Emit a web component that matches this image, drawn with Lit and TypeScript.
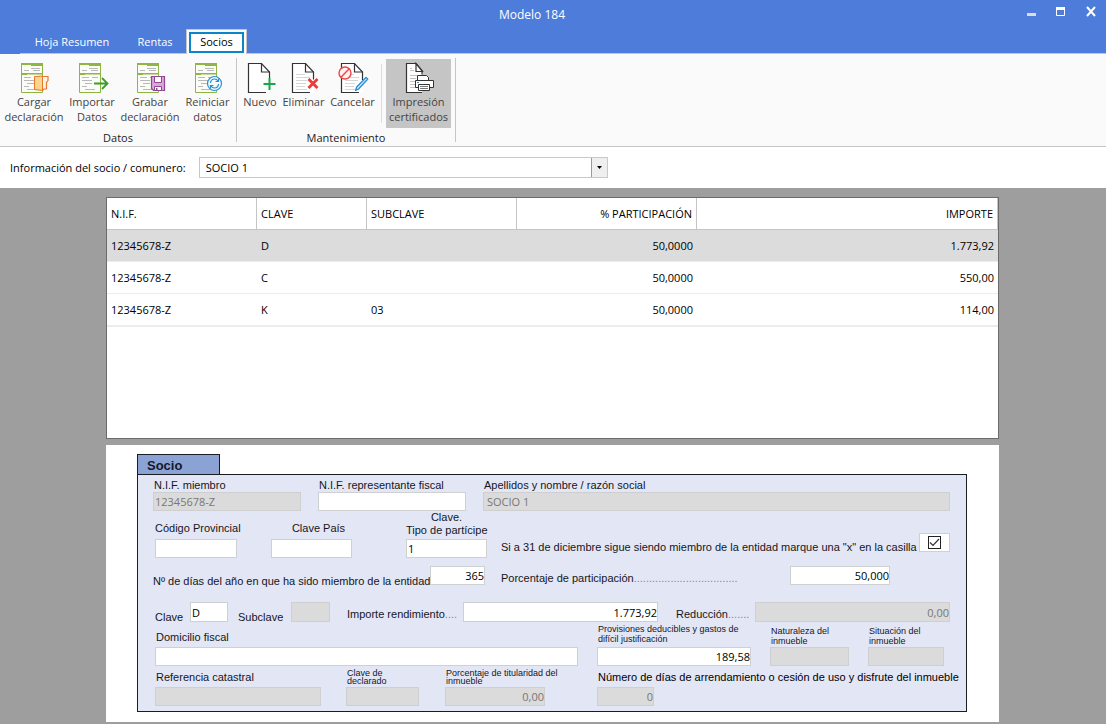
import { LitElement, html, svg, css, nothing } from "lit";
import { customElement, property } from "lit/decorators.js";
import { classMap } from "lit/directives/class-map.js";

/* Green form sheet shared by the "Datos" icons. */
const sheet = svg`
  <path d="M3.5 1.5h21v29h-21z" fill="#fbfcf8" stroke="#8fb542"/>
  <path d="M3 1h22v2H3zM13 1h12v3H13zM3 11h22v1.5H3zM3 12h6v1H3z" fill="#8fb542"/>
  <path d="M13 6.500h9M6 8.500h5M15 8.500h7M6 15.500h7M16 15.500h6M6 18.500h10M9 21.500h7M6 24.500h5M9 27.500h10" stroke="#b9b9b9"/>`;

/* White page with a folded corner used by the "Mantenimiento" icons. */
const page = svg`
  <path d="M17.5 1.5h-13v29h21v-20l-8-9z" fill="#fff"/>
  <path d="M22 30.500H4.500v-29h13l8 8.500v8" fill="none" stroke="#333" stroke-width="1.200"/>
  <path d="M17.500 1.500v8.500h8" fill="none" stroke="#333" stroke-width="1.200"/>`;

const pageLines = svg`<path d="M8 12.500h9M8 15.500h14M8 18.500h13M8 21.500h10M8 24.500h9M8 27.500h11" stroke="#d6d6d6"/>`;

const icons: Record<string, unknown> = {
  load: svg`${sheet}
    <path d="M24.500 14.500h5.500v4l-1.500 2v6.500h-2.500l-1.500 1.500" fill="#fff4e6" stroke="#e8762c" stroke-width="1.200"/>
    <path d="M16.500 14.500l8-.5v14.500l-8-1z" fill="#f8d68c" stroke="#e8762c"/>`,
  import: svg`${sheet}
    <path d="M18 21.500h13M26 16l5.500 5.500L26 27" fill="none" stroke="#3a9f2a" stroke-width="1.800"/>`,
  save: svg`${sheet}
    <path d="M17.500 14.500h13v14h-11l-2-2z" fill="#d9a9d6" stroke="#93439a" stroke-width="1.200"/>
    <path d="M20.500 14.500h7v6h-7z" fill="#fff" stroke="#93439a"/>
    <path d="M20.500 24.500h7v4h-7z" fill="#fff" stroke="#93439a"/>
    <path d="M22 26h1.500v2H22z" fill="#93439a"/>`,
  reset: svg`${sheet}
    <circle cx="22.500" cy="21.500" r="7" fill="#f4fafe" stroke="#2b8fd0" stroke-width="1.200"/>
    <path d="M18.500 21c.2-2.500 2-4 4-4 1.500 0 2.800.8 3.500 2M26.500 16.500v3h-3M26.500 22c-.2 2.500-2 4-4 4-1.500 0-2.800-.8-3.500-2M18.500 26.500v-3h3" fill="none" stroke="#2b8fd0" stroke-width="1.200"/>`,
  add: svg`${page}
    <path d="M25.500 16v12M19.500 22h12" stroke="#fafafa" stroke-width="4"/>
    <path d="M25.500 16v12M19.500 22h12" stroke="#14a84c" stroke-width="2"/>`,
  remove: svg`${page}${pageLines}
    <path d="M20.500 17l9 9M29.500 17l-9 9" stroke="#fafafa" stroke-width="5"/>
    <path d="M20.500 17l9 9M29.500 17l-9 9" stroke="#ea3a3a" stroke-width="2.800"/>`,
  cancel: svg`${page}${pageLines}
    <circle cx="8" cy="11" r="6" fill="#fdf3f3" stroke="#ee4444" stroke-width="1.400"/>
    <path d="M4 15.200l8.200-8.400" stroke="#ee4444" stroke-width="1.400"/>
    <path d="M29 15.500l1.800 1.500-9 9.800-3.300 1.700 1.200-3.500z" fill="#cfe8f8" stroke="#2b8fd0" stroke-width="1.300" stroke-linejoin="round"/>`,
  print: svg`
    <path d="M13 1.500H3.500v29H19V10z" fill="#fff"/>
    <path d="M19 30.500H3.500v-29H13l6 7v4" fill="none" stroke="#333" stroke-width="1.200"/>
    <path d="M13 1.500v8h6.500z" fill="#fff" stroke="#333" stroke-width="1.200"/>
    <path d="M7 6.500h2M7 8.500h4M7 13.500h7M7 16.500h6M7 19.500h5M7 22.500h5M7 25.500h6" stroke="#c2c2c2"/>
    <path d="M14.500 13.500h9l2 2v3h-11zM12.500 18.500h18v7h-18z" fill="#fff" stroke="#333"/>
    <path d="M15.500 22.500h11v6h-11z" fill="#fff" stroke="#333"/>
    <path d="M17 24.500h8M17 26.500h8" stroke="#777"/>
    <path d="M14 20h2v1h-2z" fill="#2b8fd0"/>`,
};

@customElement("ribbon-button")
class RibbonButton extends LitElement {
  @property() icon = "";
  @property() label = "";
  @property({ type: Boolean }) active = false;

  static styles = css`
    :host { display: block; }
    .btn {
      display: flex; flex-direction: column; align-items: center;
      width: 100%; height: 69px; margin: 0; padding: 3px 0 0;
      border: 0; background: none; color: #444;
      font: 11px/15px "Open Sans", "Noto Sans", sans-serif;
      white-space: pre;
    }
    .btn.active { background: #c5c5c5; }
    .icon { width: 32px; height: 32px; flex: none; overflow: visible; }
    .text { text-align: center; }
  `;

  render() {
    return html`<button type="button" class=${classMap({ btn: true, active: this.active })}>
      <svg class="icon" viewBox="0 0 32 32" aria-hidden="true">${icons[this.icon]}</svg>
      <span class="text">${this.label}</span>
    </button>`;
  }
}

@customElement("app-root")
class AppRoot extends LitElement {
  static styles = css`
    :host {
      display: flex; flex-direction: column; min-height: 100vh;
      background: #9e9e9e; color: #000;
      font: 11px/16px "Open Sans", "Noto Sans", sans-serif;
    }
    * { box-sizing: border-box; }
    .top { background: #4d7cdb; color: #fff; }
    .title-bar { display: grid; grid-template-columns: 42px 1fr 84px; height: 29px; align-items: center; }
    .title { grid-column: 2; margin: 0; text-align: center; font-size: 12px; font-weight: 400; line-height: 29px; }
    .controls { display: flex; gap: 20px; align-self: start; padding: 6px 0 0 4px; }
    .control { width: 10px; height: 11px; padding: 0; border: 0; background: none; color: #fff; }
    .control svg { display: block; }
    .tabs { display: flex; align-items: flex-end; height: 25px; margin-left: 20px; border-bottom: 1px solid #c5c5c5; }
    .tab { height: 24px; padding: 2px 0 0; border: 0; background: none; color: #fff; font: inherit; }
    .tab.resumen { width: 104px; }
    .tab.rentas { width: 62px; }
    .tab.selected {
      width: 61px; height: 25px; margin-bottom: -1px; padding: 2px;
      border: 1px solid #c5c5c5; border-bottom: 0; background: #fafafa; color: #000;
    }
    .focus { display: block; border: 2px solid #0b84c8; background: #fff; line-height: 16px; height: 21px; }

    .ribbon { display: flex; height: 93px; padding-top: 4px; background: #fafafa; border-bottom: 1px solid #c5c5c5; }
    .group { display: flex; flex-direction: column; height: 84px; border-right: 1px solid #c5c5c5; }
    .group-title { text-align: center; line-height: 16px; margin-top: 2px; color: #222; }
    .buttons { display: flex; padding-top: 1px; }
    .group.data .buttons { padding-left: 5px; }
    .w57 { width: 57px; }
    .w58 { width: 58px; }
    .group.manage .buttons { padding: 1px 4px 0 3px; }
    .w40 { width: 40px; }
    .w47 { width: 47px; }
    .w51 { width: 51px; }
    .w65 { width: 65px; }
    .divider { width: 1px; height: 59px; margin: 5px 4px 0 3px; background: #dcdcdc; }

    .picker { display: flex; align-items: center; height: 41px; padding-left: 10px; gap: 13px; background: #fff; }
    .combo { display: grid; width: 409px; height: 21px; }
    .combo > * { grid-area: 1 / 1; }
    .combo select {
      appearance: none; width: 100%; height: 21px; padding: 0 20px 0 6px;
      border: 1px solid #c8c8c8; border-radius: 0; background: #fff; color: #000; font: inherit;
    }
    .arrow {
      justify-self: end; width: 16px; height: 19px; margin: 1px 1px 0 0;
      border-left: 1px solid #999; background: #efefef; pointer-events: none;
      display: grid; place-items: center;
    }

    .work { flex: 1; padding: 9px 107px 2px 106px; }
    .grid-box { height: 242px; border: 1px solid #6b6b6b; background: #fff; }
    table { width: 100%; border-collapse: separate; border-spacing: 0; table-layout: fixed; }
    th, td { height: 32px; padding: 0 4px; text-align: left; font-weight: 400; line-height: 16px; }
    th { border-right: 1px solid #c5c5c5; border-bottom: 1px solid #c5c5c5; }
    td { border-bottom: 1px solid #ececec; }
    tr.selected td { background: #dcdcdc; }
    tbody tr:last-child td { height: 33px; border-bottom-width: 2px; }
    .num { text-align: right; }
    .c150 { width: 150px; }
    .c110 { width: 110px; }
    .c180 { width: 180px; }

    .sheet { margin-top: 6px; padding: 9px 32px 10px 31px; background: #fff; }
    .sheet-tab {
      width: 83px; height: 21px; margin: 0 0 -1px; padding-left: 9px;
      border: 1px solid #1a1c24; background: #8ba3d4; color: #14182a;
      font: bold 13px/22px "Liberation Sans", Arial, sans-serif;
    }
    .box {
      padding: 3px 0 5px; border: 1px solid #1a1c24; background: #e3e6f5; color: #15161c;
      font: 11px/14px "Liberation Sans", Arial, sans-serif;
    }
    .row { display: grid; padding: 0 16px 0 17px; }
    .field { display: flex; flex-direction: column; justify-content: flex-end; min-width: 0; }
    .field label { padding-left: 1px; white-space: nowrap; }
    label { white-space: nowrap; }
    input.txt {
      width: 100%; height: 19px; padding: 0 1px; border: 1px solid #cfd0d2; border-radius: 0;
      background: #fff; color: #000; font: 11px/16px "Open Sans", "Noto Sans", sans-serif;
    }
    input.txt:disabled { background: #dbdbdb; border-color: #cfcfd1; color: #777; }
    input.txt.right { padding-right: 0; text-align: right; }
    input.txt.wide-pad { padding-left: 3px; }
    .r1 { grid-template-columns: 148px 148px 1fr; column-gap: 17px; padding-left: 15px; }
    .r2 { grid-template-columns: 116px 135px 95px 1fr 31px; align-items: end; line-height: 13px; }
    .r2 .field label { padding: 0 0 2px; line-height: 13px; }
    .r2 .field label.up { padding-bottom: 4px; }
    .r2 .field label.center { text-align: center; }
    .r2 .mark { margin-bottom: 4px; }
    .r3 { grid-template-columns: 277px 71px 1fr 160px; height: 28px; padding: 8px 16px 0 15px; align-items: start; }
    .r3 label { padding-top: 8px; }
    .r3 label.high { padding-top: 5px; }
    .r4 { grid-template-columns: 35px 48px 53px 56px 116px 1fr 97px 1fr; height: 36px; padding-top: 16px; align-items: start; }
    .r4 label { padding-top: 8px; }
    .r4 label.high { padding-top: 5px; }
    .r4 label.gap { padding-left: 18px; }
    .r4 input.txt { height: 20px; }
    .r5 { grid-template-columns: 1fr 154px 79px 76px; column-gap: 19px; padding-right: 22px; }
    .r5 .field { height: 44px; }
    .r5 label { padding-bottom: 3px; }
    .r5 label.low { padding-bottom: 1px; }
    .r6 { grid-template-columns: 191px 99px 152px 1fr; }
    .r6 .field { height: 40px; }
    .r6 label { padding-bottom: 3px; }
    .r6 label.small { padding-bottom: 2px; line-height: 8px; }
    .small { font-size: 9px; line-height: 10px; }
    .strong { color: #000; }
    .dots { color: #85868e; }
    .w95 { width: 95px; }
    .w81, input.txt.w81 { width: 81px; }
    input.txt.w38 { width: 38px; }
    input.txt.w39 { width: 39px; }
    input.txt.w55 { width: 55px; }
    input.txt.w57 { width: 57px; }
    input.txt.w73 { width: 73px; }
    input.txt.w82 { width: 82px; }
    input.txt.w100 { width: 100px; }
    input.txt.w166 { width: 166px; }
    .tick {
      display: grid; place-items: center; width: 31px; height: 19px; margin-bottom: 6px;
      border: 1px solid #cfd0d2; background: #fff;
    }
    .tick > * { grid-area: 1 / 1; }
    .tick input { appearance: none; width: 13px; height: 13px; margin: 0; border: 1px solid #222; background: #fff; }
    .tick svg { pointer-events: none; display: none; }
    .tick input:checked + svg { display: block; }
  `;

  rows = [
    ["12345678-Z", "D", "", "50,0000", "1.773,92"],
    ["12345678-Z", "C", "", "50,0000", "550,00"],
    ["12345678-Z", "K", "03", "50,0000", "114,00"],
  ];

  input(id: string, value = "", cls = "", disabled = false) {
    return html`<input id=${id} class="txt ${cls}" type="text" .value=${value} ?disabled=${disabled}>`;
  }

  field(id: string, label: unknown, value = "", cls = "", disabled = false, labelCls = "") {
    return html`<div class="field">
      <label for=${id} class=${labelCls || nothing}>${label}</label>
      ${this.input(id, value, cls, disabled)}
    </div>`;
  }

  render() {
    return html`
      <header class="top">
        <div class="title-bar">
          <h1 class="title">Modelo 184</h1>
          <div class="controls">
            <button class="control" type="button" aria-label="Minimizar">
              <svg width="10" height="11"><path d="M1 7h9v3H1z" fill="#dcdcdc"/></svg>
            </button>
            <button class="control" type="button" aria-label="Maximizar">
              <svg width="10" height="11"><path d="M.5 1.500h8v8h-8z" fill="none" stroke="#fff"/><path d="M0 1h9v3H0z" fill="#fff"/></svg>
            </button>
            <button class="control" type="button" aria-label="Cerrar">
              <svg width="10" height="11"><path d="M1 1l8 9M9 1l-8 9" stroke="#fff" stroke-width="2"/></svg>
            </button>
          </div>
        </div>
        <nav class="tabs">
          <button class="tab resumen" type="button">Hoja Resumen</button>
          <button class="tab rentas" type="button">Rentas</button>
          <button class="tab selected" type="button"><span class="focus">Socios</span></button>
        </nav>
      </header>

      <section class="ribbon">
        <div class="group data">
          <div class="buttons">
            <ribbon-button class="w58" icon="load" label=${"Cargar\ndeclaración"}></ribbon-button>
            <ribbon-button class="w58" icon="import" label=${"Importar\nDatos"}></ribbon-button>
            <ribbon-button class="w58" icon="save" label=${"Grabar\ndeclaración"}></ribbon-button>
            <ribbon-button class="w57" icon="reset" label=${"Reiniciar\ndatos"}></ribbon-button>
          </div>
          <div class="group-title">Datos</div>
        </div>
        <div class="group manage">
          <div class="buttons">
            <ribbon-button class="w40" icon="add" label="Nuevo"></ribbon-button>
            <ribbon-button class="w47" icon="remove" label="Eliminar"></ribbon-button>
            <ribbon-button class="w51" icon="cancel" label="Cancelar"></ribbon-button>
            <span class="divider"></span>
            <ribbon-button class="w65" icon="print" active label=${"Impresión\ncertificados"}></ribbon-button>
          </div>
          <div class="group-title">Mantenimiento</div>
        </div>
      </section>

      <section class="picker">
        <label for="socio">Información del socio / comunero:</label>
        <div class="combo">
          <select id="socio"><option>SOCIO 1</option></select>
          <span class="arrow"><svg width="5" height="3"><path d="M0 0h5L2.500 3z"/></svg></span>
        </div>
      </section>

      <main class="work">
        <div class="grid-box">
          <table>
            <thead>
              <tr>
                <th class="c150">N.I.F.</th>
                <th class="c110">CLAVE</th>
                <th class="c150">SUBCLAVE</th>
                <th class="c180 num">% PARTICIPACIÓN</th>
                <th class="num">IMPORTE</th>
              </tr>
            </thead>
            <tbody>
              ${this.rows.map((r, i) => html`<tr class=${i === 0 ? "selected" : nothing}>
                ${r.map((c, j) => html`<td class=${j > 2 ? "num" : nothing}>${c}</td>`)}
              </tr>`)}
            </tbody>
          </table>
        </div>

        <form class="sheet">
          <h2 class="sheet-tab">Socio</h2>
          <div class="box">
            <div class="row r1">
              ${this.field("nif", "N.I.F. miembro", "12345678-Z", "", true)}
              ${this.field("rep", "N.I.F. representante fiscal")}
              ${this.field("nombre", "Apellidos y nombre / razón social", "SOCIO 1", "wide-pad", true)}
            </div>
            <div class="row r2">
              ${this.field("prov", "Código Provincial", "", "w82", false, "up")}
              ${this.field("pais", "Clave País", "", "w81", false, "up center w95")}
              ${this.field("tipo", html`Clave.<br>Tipo de partícipe`, "1", "w81", false, "center w81")}
              <label for="sigue" class="mark">Si a 31 de diciembre sigue siendo miembro de la entidad marque una "x" en la casilla</label>
              <span class="tick">
                <input id="sigue" type="checkbox" checked>
                <svg width="11" height="9"><path d="M1 4.500l3 3L10 1" fill="none" stroke="#333" stroke-width="1.200"/></svg>
              </span>
            </div>
            <div class="row r3">
              <label for="dias">Nº de días del año en que ha sido miembro de la entidad</label>
              ${this.input("dias", "365", "right w55")}
              <label for="part" class="high">Porcentaje de participación<span class="dots">..................................</span></label>
              ${this.input("part", "50,000", "right w100")}
            </div>
            <div class="row r4">
              <label for="clave">Clave</label>
              ${this.input("clave", "D", "w38")}
              <label for="sub">Subclave</label>
              ${this.input("sub", "", "w39", true)}
              <label for="imp" class="high">Importe rendimiento<span class="dots">....</span></label>
              ${this.input("imp", "1.773,92", "right")}
              <label for="red" class="high gap">Reducción<span class="dots">.......</span></label>
              ${this.input("red", "0,00", "right", true)}
            </div>
            <div class="row r5">
              ${this.field("dom", "Domicilio fiscal")}
              ${this.field("prov-ded", html`Provisiones deducibles y gastos de<br>difícil justificación`, "189,58", "right", false, "small")}
              ${this.field("nat", html`Naturaleza del<br>inmueble`, "", "", true, "small low")}
              ${this.field("sit", html`Situación del<br>inmueble`, "", "", true, "small low")}
            </div>
            <div class="row r6">
              ${this.field("ref", "Referencia catastral", "", "w166", true)}
              ${this.field("dec", html`Clave de<br>declarado`, "", "w73", true, "small")}
              ${this.field("tit", html`Porcentaje de titularidad del<br>inmueble`, "0,00", "right w100", true, "small")}
              ${this.field("arr", "Número de días de arrendamiento o cesión de uso y disfrute del inmueble", "0", "right w57", true, "strong")}
            </div>
          </div>
        </form>
      </main>
    `;
  }
}
